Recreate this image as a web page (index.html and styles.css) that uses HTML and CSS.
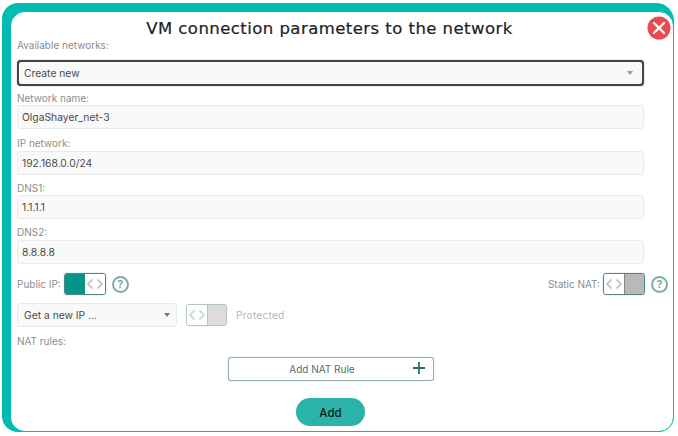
FILE: index.html
```html
<!DOCTYPE html>
<html lang="en">
<head>
  <meta charset="UTF-8" />
  <title>VM connection parameters</title>
  <link rel="stylesheet" href="styles.css">
</head>
<body>
  <div class="frame">
    <div class="panel">
      <h1 class="title">VM connection parameters to the network</h1>
      <button class="close">
        <svg width="24" height="24" viewBox="0 0 24 24"><circle cx="12" cy="12" r="11.5" fill="#e84c4f"/><path d="M7 7l10 10M17 7L7 17" stroke="#fff" stroke-width="2.4" stroke-linecap="round"/></svg>
      </button>

      <label class="label label-first">Available networks:</label>
      <div class="select select-open">
        <span>Create new</span>
        <span class="caret caret-small"></span>
      </div>

      <label class="label label-name">Network name:</label>
      <div class="input">OlgaShayer_net-3</div>
      <label class="label label-ip">IP network:</label>
      <div class="input">192.168.0.0/24</div>
      <label class="label label-dns1">DNS1:</label>
      <div class="input">1.1.1.1</div>
      <label class="label">DNS2:</label>
      <div class="input">8.8.8.8</div>

      <div class="switch-row">
        <span class="switch-label">Public IP:</span>
        <div class="switch switch-on">
          <span class="switch-fill"></span>
          <span class="knob">
            <svg width="20" height="12" viewBox="0 0 20 12"><path d="M7.5 1.5L3 6l4.5 4.5M12.5 1.5L17 6l-4.5 4.5" fill="none" stroke="#c4c9c9" stroke-width="2"/></svg>
          </span>
        </div>
        <span class="help">?</span>
        <span class="spacer"></span>
        <span class="switch-label">Static NAT:</span>
        <div class="switch switch-off">
          <span class="knob">
            <svg width="20" height="12" viewBox="0 0 20 12"><path d="M7.5 1.5L3 6l4.5 4.5M12.5 1.5L17 6l-4.5 4.5" fill="none" stroke="#c4c9c9" stroke-width="2"/></svg>
          </span>
          <span class="switch-fill"></span>
        </div>
        <span class="help">?</span>
      </div>

      <div class="ip-row">
        <div class="select select-ip">
          <span>Get a new IP ...</span>
          <span class="caret"></span>
        </div>
        <div class="switch switch-disabled">
          <span class="knob">
            <svg width="20" height="12" viewBox="0 0 20 12"><path d="M7.5 1.5L3 6l4.5 4.5M12.5 1.5L17 6l-4.5 4.5" fill="none" stroke="#d4d8d8" stroke-width="2"/></svg>
          </span>
          <span class="switch-fill"></span>
        </div>
        <span class="protected">Protected</span>
      </div>

      <label class="label label-nat">NAT rules:</label>
      <button class="nat-btn">
        <span>Add NAT Rule</span>
        <svg class="plus" width="12" height="12" viewBox="0 0 12 12"><path d="M6 0v12M0 6h12" stroke="#2f6b6b" stroke-width="1.8"/></svg>
      </button>
      <button class="add-btn">Add</button>
    </div>
  </div>
</body>
</html>
```

FILE: styles.css
```css
html, body {
  margin: 0;
  height: 100%;
  background-color: #fff;
}

body {
  font-family: Inter, 'Liberation Sans', sans-serif;
  overflow: hidden;
}

.frame {
  margin: 3px 0 0 2px;
  width: 672px;
  height: 429px;
  box-sizing: border-box;
  padding: 8px 0 0 8px;
  background-color: #00bbb0;
  border-radius: 16px 18px 16px 16px;
}

.panel {
  position: relative;
  box-sizing: border-box;
  height: 421px;
  padding: 0 29px 0 6px;
  background-color: #fff;
  border: 1px solid #00bbb0;
  border-radius: 15px;
}

.title {
  margin: 0;
  padding-top: 7px;
  height: 26px;
  box-sizing: border-box;
  font-family: 'DejaVu Sans', sans-serif;
  font-size: 16.5px;
  font-weight: 400;
  letter-spacing: 0.45px;
  line-height: 20px;
  text-align: center;
  color: #222;
  width: 625px;
  white-space: nowrap;
  -webkit-text-stroke: 0.2px #222;
}

.close {
  position: absolute;
  top: 4px;
  right: 2px;
  width: 24px;
  height: 24px;
  padding: 0;
  border: none;
  background: none;
}

.label {
  display: block;
  font-size: 10px;
  line-height: 12px;
  color: #8a8d8d;
  margin: 7px 0 2px;
}

.label-first {
  margin: 1px 0 9px;
}

.label-name {
  margin: 6px 0 1px;
}

.label-ip {
  margin: 8px 0 2px;
}

.label-dns1 {
  margin: 7px 0 1px;
}

.label-nat {
  margin: 8px 0 10px;
}

.select,
.input {
  display: flex;
  align-items: center;
  box-sizing: border-box;
  font-size: 10.3px;
  color: #4a4a4a;
  background-color: #f9f9f9;
  border: 1px solid #e9eaea;
  border-radius: 3px;
}

.input {
  height: 24px;
  padding-left: 4px;
}

.select {
  justify-content: space-between;
}

.select-open {
  height: 26px;
  padding: 0 8px 0 5px;
  border: 2px solid #444;
  border-radius: 4px;
  box-shadow: 0 0 1px #555;
}

.select-ip {
  width: 160px;
  height: 24px;
  padding: 0 5px 0 6px;
}

.caret {
  width: 0;
  height: 0;
  border-left: 3.5px solid transparent;
  border-right: 3.5px solid transparent;
  border-top: 4px solid #777;
  margin-right: 1px;
}

.caret-small {
  border-left-width: 3px;
  border-right-width: 3px;
  border-top-color: #999;
  border-top-width: 4px;
}

.switch-row {
  display: flex;
  align-items: center;
  height: 22px;
  margin: 9px -24px 0 0;
}

.switch-label {
  font-size: 10px;
  color: #8a8d8d;
  margin-right: 3px;
}

.spacer {
  flex: 1;
}

.switch {
  display: flex;
  box-sizing: border-box;
  width: 42px;
  height: 22px;
  border: 1px solid #4e8585;
  border-radius: 3px;
  box-shadow: 0 0 1px #4e8585;
  overflow: hidden;
}

.switch-fill {
  flex: 1;
}

.knob {
  display: flex;
  align-items: center;
  justify-content: center;
  width: 20px;
  background-color: #fff;
}

.switch-on .switch-fill {
  background-color: #069488;
}

.switch-off .switch-fill {
  background-color: #b9b9b9;
}

.switch-off .knob {
  border-right: 1px solid #7c8c8c;
}

.switch-disabled {
  width: 41px;
  border-color: #b5c6c6;
  box-shadow: 0 0 1px #b5c6c6;
  margin: 0 9px;
}

.switch-disabled .switch-fill {
  background-color: #dcdcdc;
}

.switch-disabled .knob {
  border-right: 1px solid #b5c6c6;
}

.help {
  display: flex;
  align-items: center;
  justify-content: center;
  box-sizing: border-box;
  width: 17px;
  height: 17px;
  margin: 0 0 0 6px;
  border: 2px solid #7fabab;
  border-radius: 50%;
  font-size: 11px;
  font-weight: 600;
  color: #6d9f9f;
}

.ip-row {
  display: flex;
  align-items: center;
  margin-top: 8px;
  height: 24px;
}

.protected {
  font-size: 10px;
  letter-spacing: 0.3px;
  color: #b4b6b6;
}

.nat-btn {
  display: flex;
  align-items: center;
  box-sizing: border-box;
  position: relative;
  justify-content: center;
  width: 206px;
  height: 24px;
  margin-left: 211px;
  padding: 0 18px 0 0;
  font-family: inherit;
  font-size: 10px;
  color: #4f6f6f;
  background-color: #fff;
  border: 1px solid #8fb0ae;
  border-radius: 3px;
  box-shadow: 0 0 1px #8fb0ae;
}

.plus {
  position: absolute;
  right: 8px;
  top: 4px;
}

.add-btn {
  display: block;
  width: 69px;
  height: 28px;
  margin: 17px 0 0 279px;
  padding: 2px 0 0;
  font-family: inherit;
  font-size: 11.5px;
  font-weight: 500;
  color: #0d1b1e;
  background-color: #2bb3a9;
  border: none;
  border-radius: 14px;
}
```
